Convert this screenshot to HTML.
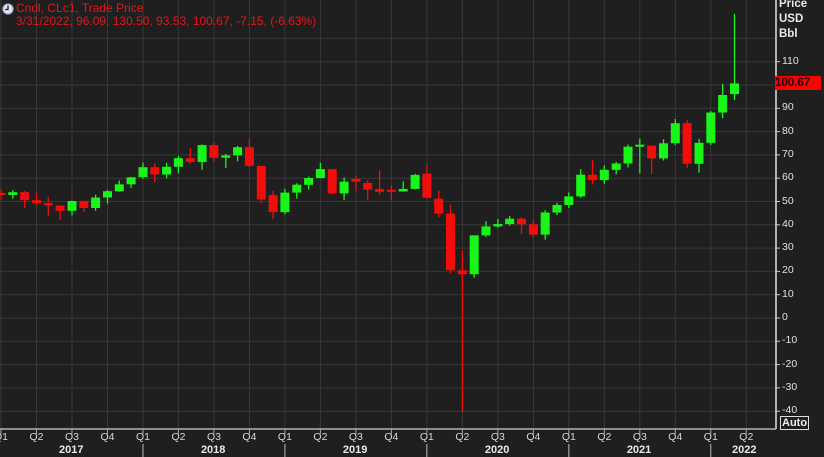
<!DOCTYPE html>
<html><head><meta charset="utf-8"><style>
html,body{margin:0;padding:0;background:#1f1f1f;width:824px;height:457px;overflow:hidden;font-family:"Liberation Sans",Arial,sans-serif}
#c{position:absolute;left:0;top:0}
.t{position:absolute;font-size:11px;white-space:nowrap}
</style></head><body>
<svg id="c" width="824" height="457" xmlns="http://www.w3.org/2000/svg"></svg>
<svg style="position:absolute;left:2px;top:3px" width="12" height="12"><circle cx="6" cy="6" r="5.3" fill="#dfe6f0" stroke="#7a8aa0" stroke-width="1"/><path d="M6 2.5V6.5H3" stroke="#222" stroke-width="1.3" fill="none"/></svg>
<div class="t" style="left:16px;top:1px;color:#e8141a;font-size:12px">Cndl, CLc1, Trade Price</div>
<div class="t" style="left:16px;top:14px;color:#e8141a;font-size:12px">3/31/2022, 96.09, 130.50, 93.53, 100.67, -7.15, (-6.63%)</div>
<div class="t" style="left:779px;top:-2px;color:#e8e8e8;font-weight:bold;font-size:11.5px">Price</div>
<div class="t" style="left:779px;top:13px;color:#e8e8e8;font-weight:bold;font-size:11.5px">USD</div>
<div class="t" style="left:779px;top:28px;color:#e8e8e8;font-weight:bold;font-size:11.5px">Bbl</div>
<div id="yl"></div>
<div class="t" style="left:775px;top:76px;width:46px;height:14px;background:#f00;color:#1a0000;font-weight:bold;font-size:11.5px;line-height:14px">100.67</div>
<div class="t" style="left:780px;top:416px;border:1px solid #ddd;color:#eee;font-weight:bold;font-size:11px;line-height:12px;padding:0 1px">Auto</div>
<div id="xl"></div>
<script>
var s=document.getElementById('c'),h='';
function Y(v){return 318-2.33*v}
for(var v=-40;v<=120;v+=10){var y=Y(v).toFixed(1);h+='<line x1="0" x2="776" y1="'+y+'" y2="'+y+'" stroke="#383838" stroke-width="1"/>';}
for(var q=0;q<22;q++){var x=(1+q*3*11.83).toFixed(1);h+='<line x1="'+x+'" x2="'+x+'" y1="0" y2="428" stroke="#383838" stroke-width="1"/>';}
var d=[[53.7,55.2,50.7,52.8],[52.8,54.9,51.2,54],[54,54.6,47.1,50.6],[50.6,53.8,48.2,49.3],[49.3,52,43.8,48.3],[48.3,48.4,42.1,46],[46,50.4,44,50.2],[50.2,50.4,45.6,47.2],[47.2,52.9,46,51.7],[51.7,54.9,49.1,54.4],[54.4,59,54.2,57.4],[57.4,60.5,55.8,60.4],
[60.4,66.7,59.8,64.7],[64.7,66.4,58.1,61.6],[61.6,66.6,59.9,64.9],[64.9,69.6,62,68.6],[68.6,72.9,66.2,67],[67,74.5,63.6,74.2],[74.2,75.3,67,68.8],[68.8,70.4,64.4,69.8],[69.8,73.8,67.3,73.3],[73.3,76.9,64.8,65.3],[65.3,65.4,49.4,50.9],[52.8,54.6,42.4,45.4],
[45.4,55.4,44.4,53.8],[53.8,57.8,51.2,57.2],[57.2,60.7,55.1,60.1],[60.1,66.6,60,63.9],[63.9,63.9,53,53.5],[53.5,60.3,50.6,58.5],[59.7,60.9,54.4,58.5],[58,59.2,50.5,55.1],[55.4,63.4,52.8,54.1],[54.6,57,50.6,54.3],[54.3,58.7,54.2,55.4],[55.4,61.9,55.1,61.4],
[62,65.6,51.3,51.6],[51.2,54.7,43.2,44.8],[44.8,48.7,19.3,20.5],[20.5,29.1,-40.3,18.8],[18.8,35,17.3,35.5],[35.5,41.6,34.7,39.3],[39.3,42.5,38.7,40.3],[40.3,43.8,39.6,42.6],[42.6,43.4,36.1,40.2],[40.2,41.9,34.9,35.8],[35.8,46.3,33.6,45.3],[45.3,49.4,44.1,48.5],
[48.5,53.9,47.2,52.2],[52.2,63.8,51.6,61.5],[61.5,67.98,57.3,59.2],[59.2,65.5,57.6,63.6],[63.6,67,61.6,66.3],[66.3,74.4,64.6,73.5],[73.5,76.98,62,73.95],[73.95,74,61.7,68.5],[68.5,76.7,67.6,75],[75,85.4,74.2,83.6],[83.6,84.97,64.4,66.2],[66.2,76.9,62.4,75.2],
[75.2,88.8,74.3,88.2],[88.2,100.5,85.7,95.7],[96.09,130.5,93.53,100.67]];
for(var i=0;i<d.length;i++){var o=d[i][0],hi=d[i][1],lo=d[i][2],c=d[i][3];var col=c>=o?'#19f519':'#f20d0d';var x=1+i*11.83;
h+='<line x1="'+x.toFixed(1)+'" x2="'+x.toFixed(1)+'" y1="'+Y(hi).toFixed(1)+'" y2="'+Y(lo).toFixed(1)+'" stroke="'+col+'" stroke-width="1.3"/>';
var t=Y(Math.max(o,c)),b=Y(Math.min(o,c));if(b-t<2){t-=1;b=t+2}
h+='<rect x="'+(x-4.5).toFixed(1)+'" y="'+t.toFixed(1)+'" width="9" height="'+(b-t).toFixed(1)+'" fill="'+col+'"/>';}
h+='<line x1="776" x2="776" y1="0" y2="429" stroke="#e0e0e0" stroke-width="1.5"/>';
h+='<line x1="0" x2="776" y1="429" y2="429" stroke="#cfcfcf" stroke-width="1.2"/>';
var yl='';
for(var v=-40;v<=110;v+=10){var y=Y(v);h+='<line x1="776" x2="780" y1="'+y+'" y2="'+y+'" stroke="#ccc"/>';if(v!=100)yl+='<div class="t" style="left:782px;top:'+(y-7)+'px;color:#e0e0e0;font-size:10.5px">'+v+'</div>';}
document.getElementById('yl').innerHTML=yl;
var xl='',qn=['Q1','Q2','Q3','Q4'],yrs=['2017','2018','2019','2020','2021','2022'];
for(var q=0;q<22;q++){var x=1+q*3*11.83;h+='<line x1="'+x+'" x2="'+x+'" y1="429" y2="434" stroke="#aaa"/>';xl+='<div class="t" style="left:'+(x-7)+'px;top:431px;color:#d8d8d8;font-size:10.5px">'+qn[q%4]+'</div>';
if(q%4==0&&q>0)h+='<line x1="'+x+'" x2="'+x+'" y1="444" y2="457" stroke="#bbb"/>';}
for(var k=0;k<6;k++){var x=(k<5)?1+(k*12+6)*11.83:745;xl+='<div class="t" style="left:'+(x-13)+'px;top:444px;color:#e8e8e8;font-weight:bold;font-size:11px">'+yrs[k]+'</div>';}
document.getElementById('xl').innerHTML=xl;
s.innerHTML=h;
</script>
</body></html>
